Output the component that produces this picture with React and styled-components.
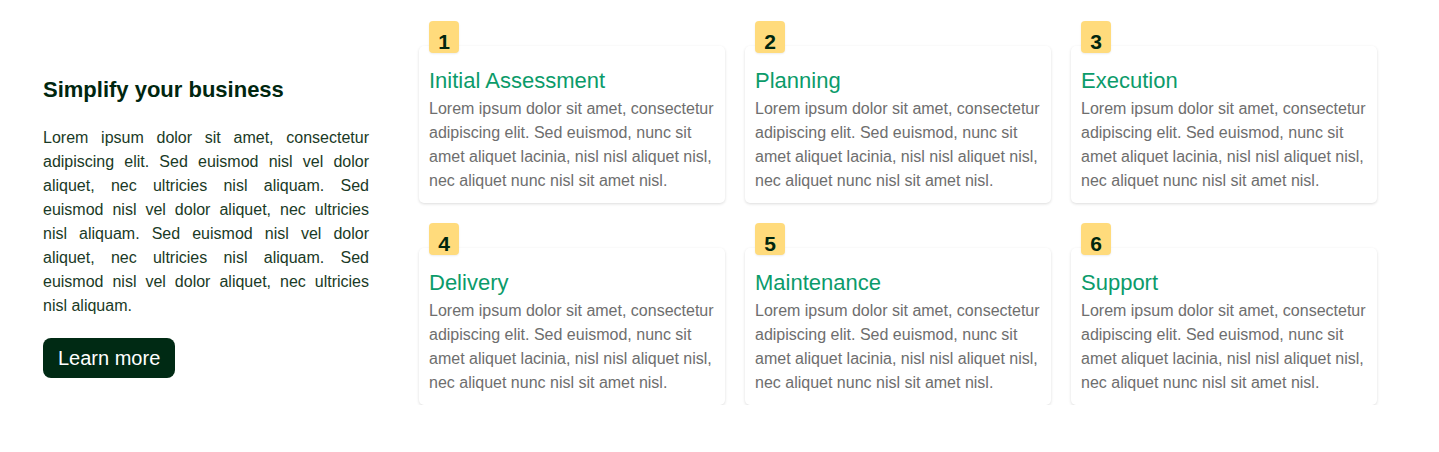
import React from 'react';
import styled, { createGlobalStyle } from 'styled-components';

const steps = [
    'Initial Assessment',
    'Planning',
    'Execution',
    'Delivery',
    'Maintenance',
    'Support',
];

const stepText =
    'Lorem ipsum dolor sit amet, consectetur adipiscing elit. Sed euismod, nunc sit amet aliquet lacinia, nisl nisl aliquet nisl, nec aliquet nunc nisl sit amet nisl.';

const introText =
    'Lorem ipsum dolor sit amet, consectetur adipiscing elit. Sed euismod nisl vel dolor aliquet, nec ultricies nisl aliquam. Sed euismod nisl vel dolor aliquet, nec ultricies nisl aliquam. Sed euismod nisl vel dolor aliquet, nec ultricies nisl aliquam. Sed euismod nisl vel dolor aliquet, nec ultricies nisl aliquam.';

const App = () => {
    return (
        <>
            <GlobalStyle />
            <Section>
                <Intro>
                    <Heading>Simplify your business</Heading>
                    <IntroText>{introText}</IntroText>
                    <LearnButton>Learn more</LearnButton>
                </Intro>
                <StepGrid>
                    {steps.map((title, i) => (
                        <StepCard key={title}>
                            <Badge>{i + 1}</Badge>
                            <StepTitle>{title}</StepTitle>
                            <StepText>{stepText}</StepText>
                        </StepCard>
                    ))}
                </StepGrid>
            </Section>
        </>
    );
};

export default App;

const GlobalStyle = createGlobalStyle`
    body {
        margin: 0;
        background: #ffffff;
        font-family: "Liberation Sans", Arial, sans-serif;
    }
`;

const Section = styled.section`
    display: flex;
    align-items: flex-start;
    gap: 50px;
    padding: 21px 0 0 43px;
`;

const Intro = styled.div`
    width: 326px;
    padding-top: 57px;
`;

const Heading = styled.h2`
    margin: 0;
    font-size: 22px;
    line-height: 24px;
    font-weight: 700;
    color: #00260f;
`;

const IntroText = styled.p`
    margin: 24px 0 20px;
    font-size: 16px;
    line-height: 24px;
    text-align: justify;
    color: #1a3a26;
`;

const LearnButton = styled.button`
    height: 40px;
    padding: 0 15px;
    border: none;
    border-radius: 8px;
    background: #002a14;
    color: #ffffff;
    font-family: inherit;
    font-size: 20px;
    cursor: pointer;
`;

const StepGrid = styled.div`
    display: grid;
    grid-template-columns: repeat(3, 306px);
    gap: 20px;
`;

const StepCard = styled.div`
    margin-top: 25px;
    padding: 0 10px 10px;
    background: #ffffff;
    border-radius: 5px;
    box-shadow: 0 1px 3px rgba(0, 0, 0, 0.14);
`;

const Badge = styled.div`
    box-sizing: border-box;
    width: 30px;
    height: 32px;
    margin-top: -25px;
    padding-top: 11px;
    border-radius: 4px;
    background: #ffdb7c;
    box-shadow: 0 1px 2px rgba(0, 0, 0, 0.08);
    font-size: 21px;
    line-height: 20px;
    font-weight: 700;
    text-align: center;
    color: #00260f;
`;

const StepTitle = styled.h3`
    margin: 14px 0 2px;
    font-size: 22px;
    line-height: 28px;
    font-weight: 400;
    color: #0b9b6a;
`;

const StepText = styled.p`
    margin: 0;
    font-size: 16px;
    line-height: 24px;
    color: #6e6e6e;
`;
